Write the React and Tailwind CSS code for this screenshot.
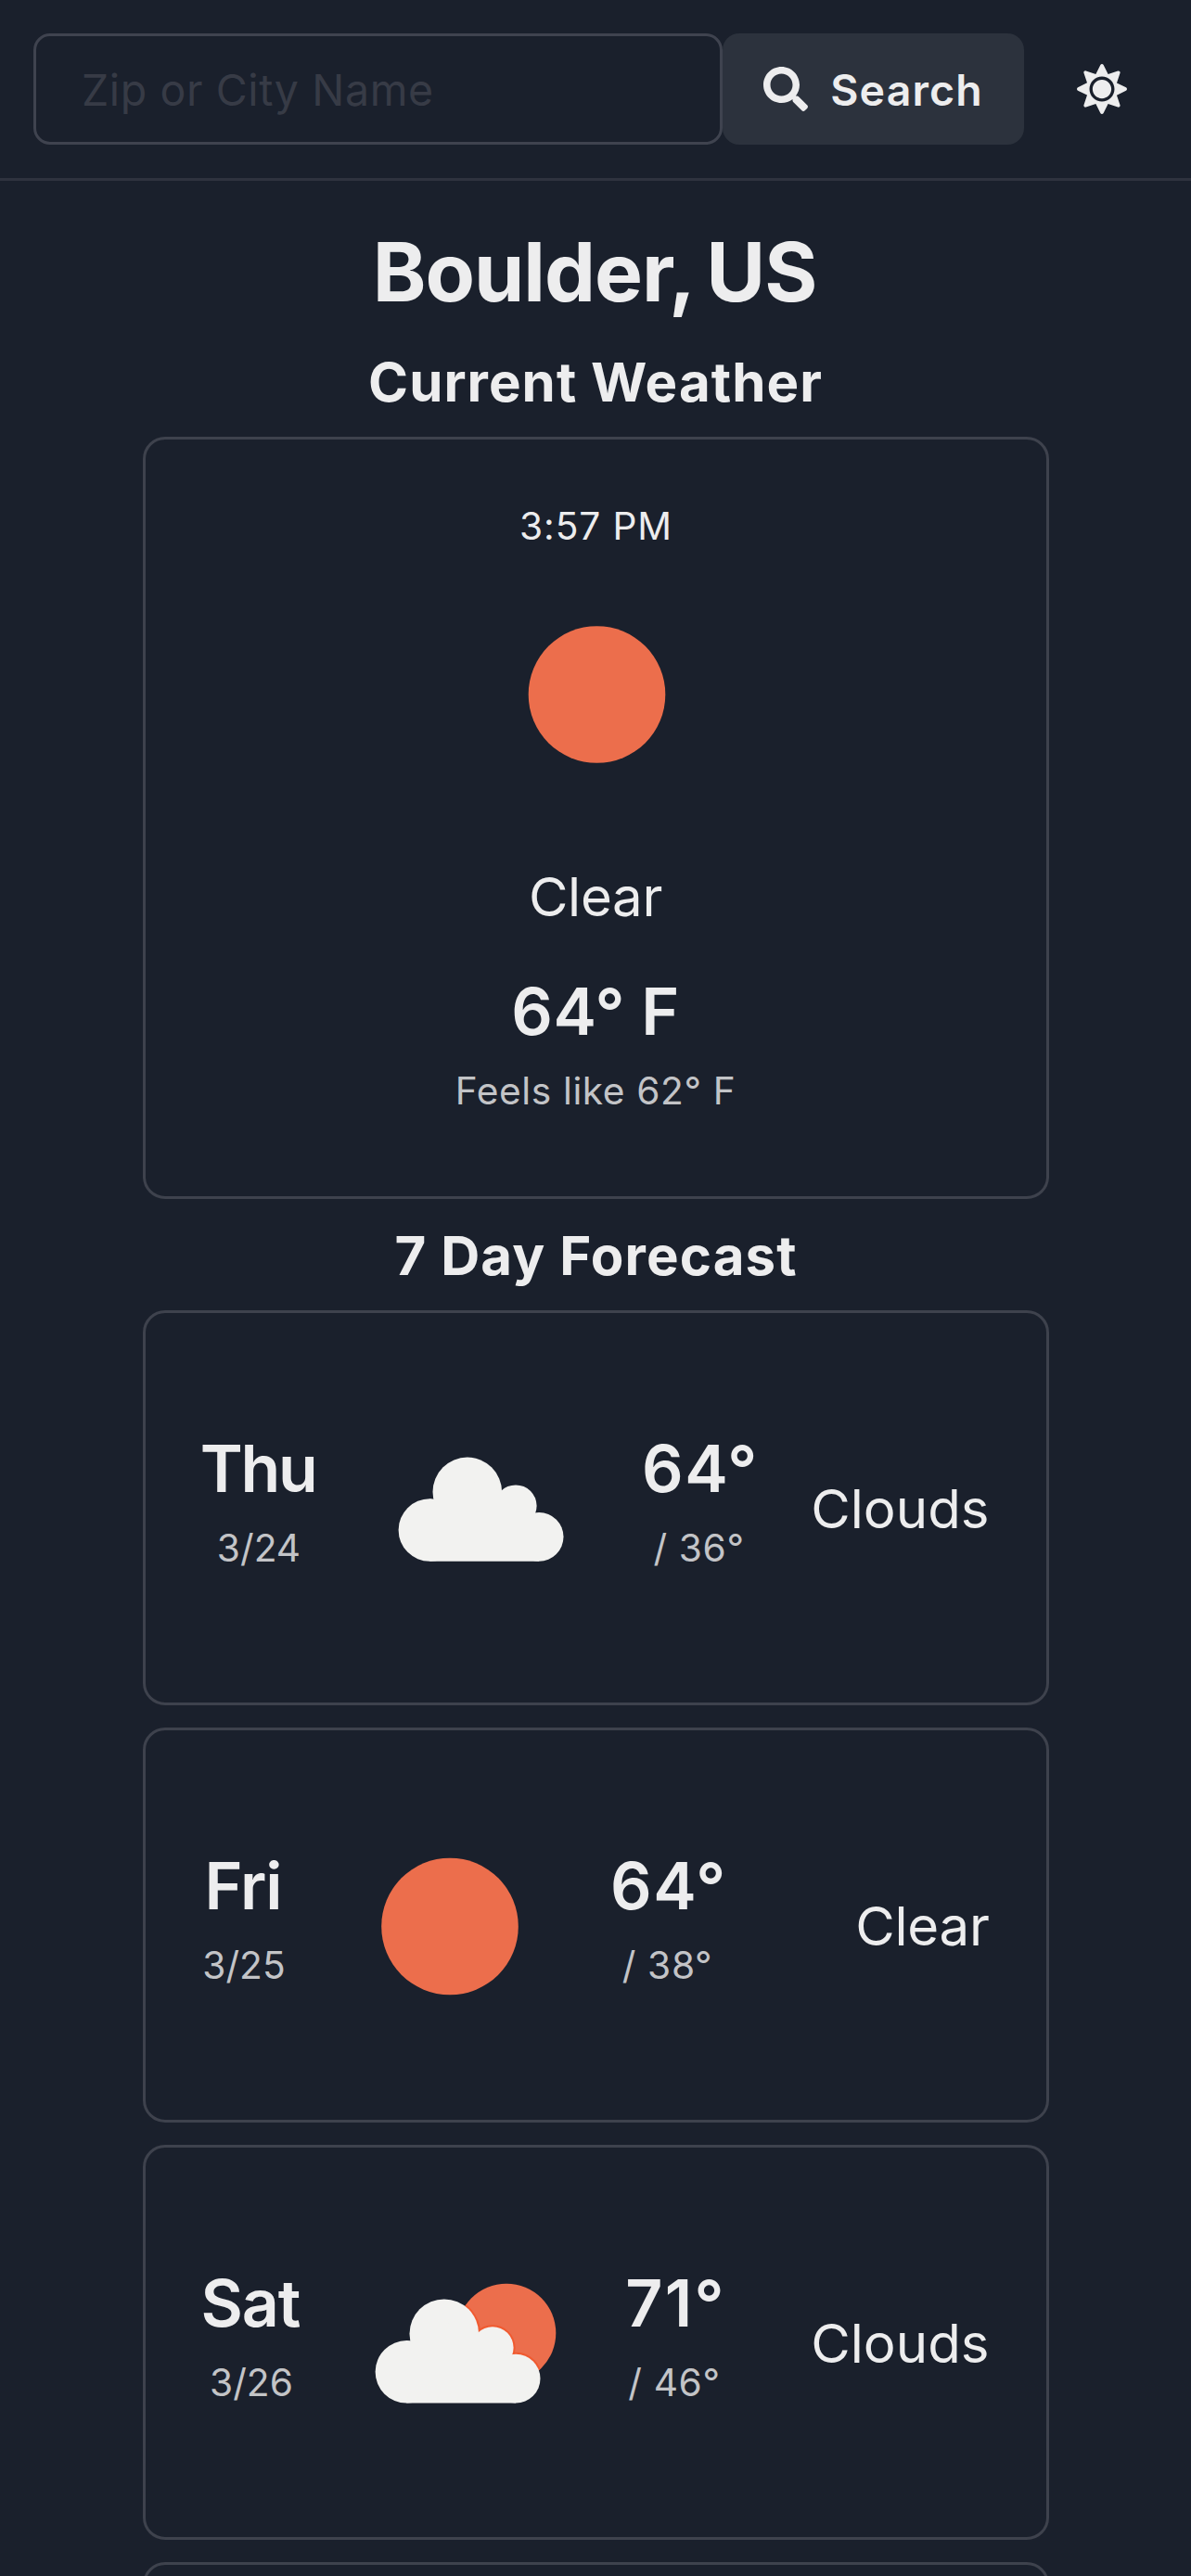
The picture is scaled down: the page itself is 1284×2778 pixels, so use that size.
import React from "react";
import { FaSearch, FaSun } from "react-icons/fa";

const CLOUD_BODY = "M66.3 147.7V80.5L71 81L106 60L142 71L159 88L179 96L184 121.3V147.7Z";

function CloudShape() {
  return (
    <>
      <circle cx="106.8" cy="72.9" r="37.3" />
      <circle cx="66.3" cy="114" r="33.7" />
      <circle cx="159" cy="88" r="22.6" />
      <circle cx="184.1" cy="121.3" r="26.4" />
      <path d={CLOUD_BODY} />
    </>
  );
}

function CloudIcon() {
  return (
    <svg width="240" height="180" viewBox="0 0 240 180" fill="#f2f2f0">
      <CloudShape />
    </svg>
  );
}

function SunIcon() {
  return (
    <svg width="240" height="180" viewBox="0 0 240 180">
      <circle cx="121" cy="91.5" r="73.8" fill="#ec6e4c" />
    </svg>
  );
}

function PartlyCloudyIcon() {
  return (
    <svg width="240" height="180" viewBox="0 0 240 180">
      <clipPath id="sun-disc">
        <circle cx="166" cy="80" r="53.3" />
      </clipPath>
      <circle cx="166" cy="80" r="53.3" fill="#ec6e4c" />
      <g clipPath="url(#sun-disc)">
        <g transform="translate(-8 7.8)" fill="none" stroke="#f05a30" strokeWidth="4">
          <CloudShape />
        </g>
      </g>
      <g transform="translate(-8 7.8)" fill="#f2f2f0">
        <CloudShape />
      </g>
    </svg>
  );
}

const days = [
  {
    day: "Thu", date: "3/24", high: "64°", low: "/ 36°", label: "Clouds", Icon: CloudIcon,
    cols: "grid-cols-[125px_350px_124px_1fr]", daySp: "tracking-[-2.3px]", highSp: "tracking-[1.6px]", labelSp: "tracking-[0px]",
  },
  {
    day: "Fri", date: "3/25", high: "64°", low: "/ 38°", label: "Clear", Icon: SunIcon,
    cols: "grid-cols-[93px_348px_124px_1fr]", daySp: "tracking-[-1.06px]", highSp: "tracking-[1.6px]", labelSp: "tracking-[-0.3px]",
  },
  {
    day: "Sat", date: "3/26", high: "71°", low: "/ 46°", label: "Clouds", Icon: PartlyCloudyIcon,
    cols: "grid-cols-[109px_348px_107px_1fr]", daySp: "tracking-[-1.09px]", highSp: "tracking-[2.2px]", labelSp: "tracking-[0px]",
  },
];

function ForecastCard({ item }) {
  const { day, date, high, low, label, Icon, cols, daySp, highSp, labelSp } = item;
  return (
    <div className={`grid h-[426px] items-center rounded-3xl border-3 border-[#3e424d] px-[60px] ${cols}`}>
      <div className="flex flex-col items-center pb-[21px]">
        <p className={`pr-[2px] text-[69.8px] leading-[108px] font-semibold ${daySp}`}>{day}</p>
        <p className="text-[40.7px] leading-[63px] text-[#c3c4c7]">{date}</p>
      </div>
      <div className="flex justify-center">
        <Icon />
      </div>
      <div className="flex flex-col items-center whitespace-nowrap pb-[21px]">
        <p className={`pl-[3px] text-[69.8px] leading-[108px] font-semibold ${highSp}`}>{high}</p>
        <p className="text-[40.7px] leading-[63px] tracking-[0.63px] text-[#c3c4c7]">{low}</p>
      </div>
      <p className={`pt-[2px] pr-[1px] text-right text-[58.2px] leading-[90px] ${labelSp}`}>{label}</p>
    </div>
  );
}

export default function App() {
  return (
    <div className="h-[2778px] w-[1284px] overflow-hidden bg-[#1a202c] font-[Inter,sans-serif] text-[#ededee]">
      <header className="flex h-[195px] items-center border-b-3 border-[#2f333f] px-9">
        <input
          type="text"
          placeholder="Zip or City Name"
          className="h-[120px] w-[743px] rounded-[18px] border-3 border-[#3f434f] bg-transparent pt-[2px] pl-[49px] text-[46.5px] tracking-[0.6px] outline-none placeholder:text-[#373b46]"
        />
        <button className="flex h-[120px] w-[325px] items-center justify-center gap-6 rounded-[18px] bg-[#2c323d]">
          <FaSearch size={48} />
          <span className="pt-[2px] text-[46.5px] leading-[60px] font-semibold tracking-[1.1px]">Search</span>
        </button>
        <button className="ml-6 flex h-[120px] w-[120px] items-center justify-center">
          <FaSun size={54} />
        </button>
      </header>

      <main className="flex flex-col items-center">
        <h1 className="mt-11 pr-[2px] text-[87.3px] leading-[108px] font-bold tracking-[-1px] [word-spacing:-5px]">Boulder, US</h1>
        <h2 className="mt-[29px] text-[58.2px] leading-[72px] font-bold tracking-[1.05px]">Current Weather</h2>

        <section className="mt-[23px] flex h-[822px] w-[977px] flex-col items-center rounded-3xl border-3 border-[#3e424d] pt-[62px]">
          <p className="pl-[1px] text-[40.7px] leading-[63px] tracking-[0.88px]">3:57 PM</p>
          <svg className="-mt-px" width="300" height="300" viewBox="0 0 300 300">
            <circle cx="151.5" cy="151" r="73.8" fill="#ec6e4c" />
          </svg>
          <p className="mt-6 text-[58.2px] leading-[90px] tracking-[-0.3px]">Clear</p>
          <p className="mt-[25px] text-[69.8px] leading-[108px] font-semibold tracking-[0.6px] [word-spacing:-1px]">64° F</p>
          <p className="text-[40.7px] leading-[63px] tracking-[0.6px] text-[#c3c4c7]">Feels like 62° F</p>
        </section>

        <h2 className="mt-[25px] pl-[1px] text-[58.2px] leading-[72px] font-bold tracking-[1.1px]">7 Day Forecast</h2>

        <section className="mt-[23px] flex w-[977px] flex-col gap-6">
          {days.map((item) => (
            <ForecastCard key={item.day} item={item} />
          ))}
          <div className="h-[426px] rounded-3xl border-3 border-[#3e424d]" />
        </section>
      </main>
    </div>
  );
}
